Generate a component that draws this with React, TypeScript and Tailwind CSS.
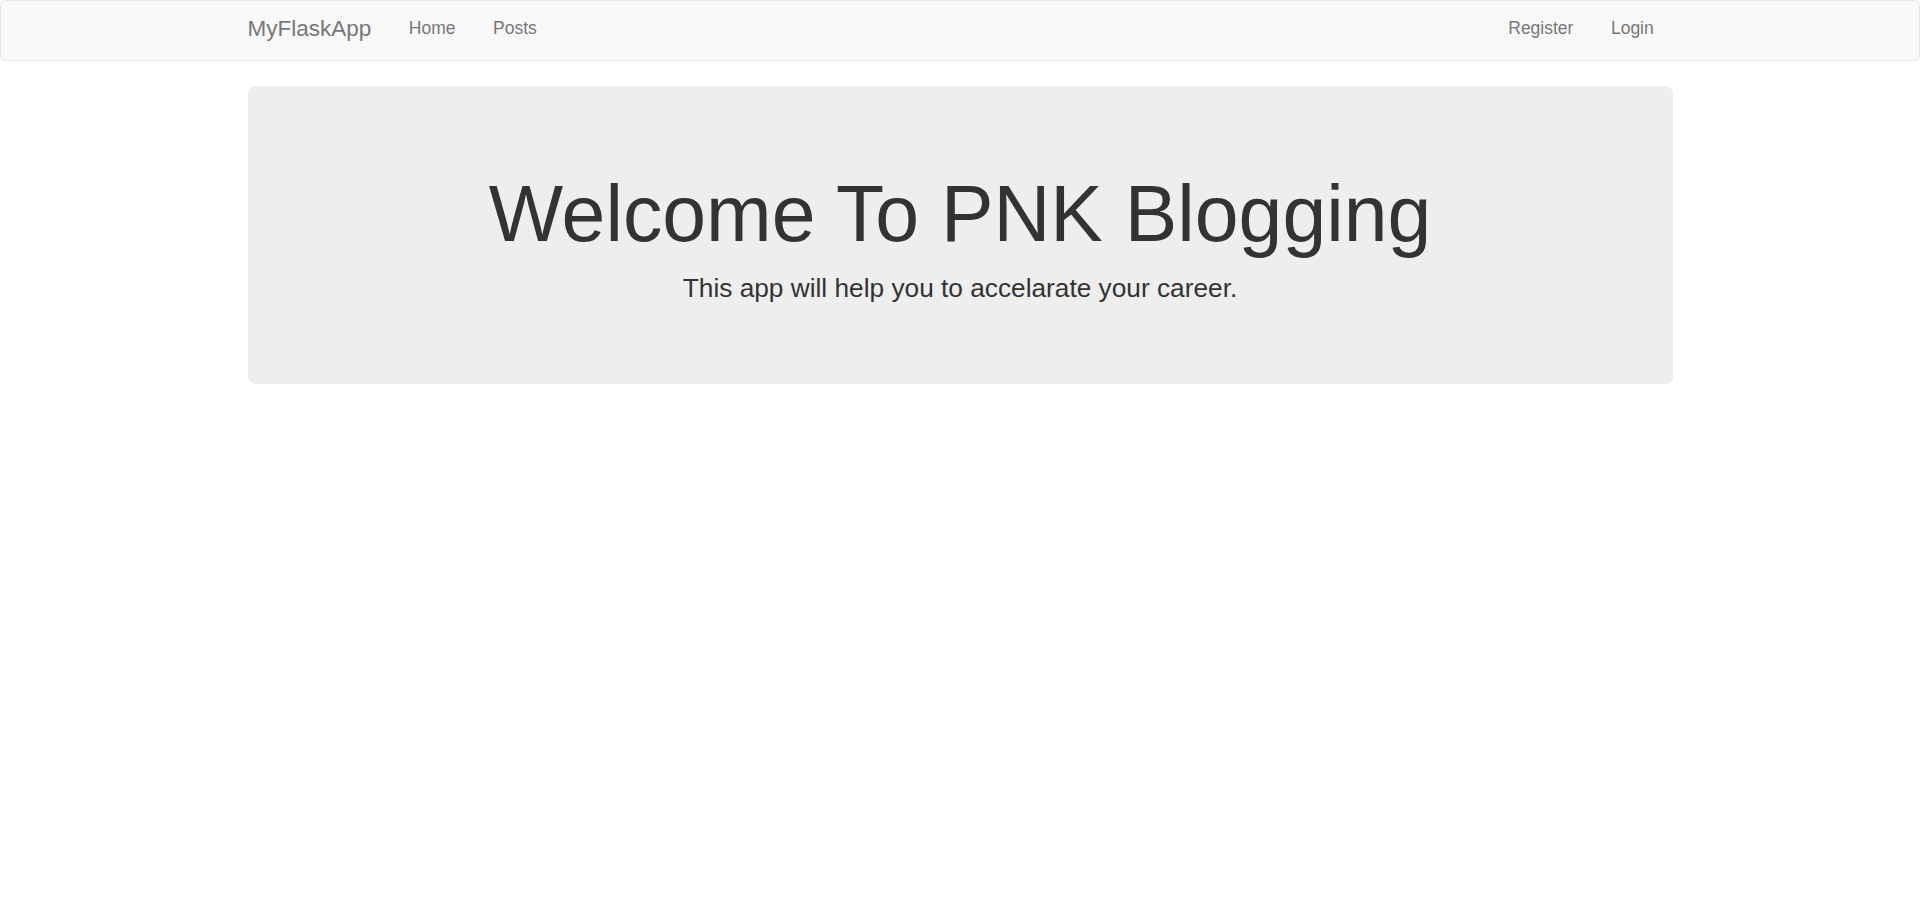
import React from 'react';

const leftLinks = ['Home', 'Posts'];
const rightLinks = ['Register', 'Login'];

export default function App() {
  return (
    <div className="min-h-screen bg-white text-[#333] font-['Liberation_Sans',Arial,sans-serif]">
      <nav className="h-[61px] bg-[#f8f8f8] border border-[#e7e7e7] rounded-[5px]">
        <div className="w-[1425px] mx-auto h-full flex items-center justify-between pb-[5px]">
          <div className="flex items-center">
            <a href="#" className="-ml-[18.75px] px-[18.75px] text-[22.5px] text-[#777] leading-[25px]">
              MyFlaskApp
            </a>
            {leftLinks.map((link) => (
              <a key={link} href="#" className="px-[18.75px] text-[17.5px] text-[#777] leading-[25px]">
                {link}
              </a>
            ))}
          </div>
          <div className="flex items-center">
            {rightLinks.map((link) => (
              <a key={link} href="#" className="px-[18.75px] text-[17.5px] text-[#777] leading-[25px]">
                {link}
              </a>
            ))}
          </div>
        </div>
      </nav>

      <div className="w-[1425px] mx-auto mt-[25px]">
        <div className="bg-[#eee] rounded-[7.5px] pt-[60px] pb-[60px] text-center">
          <h1 className="mt-[25px] mb-[12.5px] text-[78.75px] leading-[1.1] font-normal">
            Welcome To PNK Blogging
          </h1>
          <p className="mb-[16.5px] text-[26.25px] leading-[37.5px]">
            This app will help you to accelarate your career.
          </p>
        </div>
      </div>
    </div>
  );
}
